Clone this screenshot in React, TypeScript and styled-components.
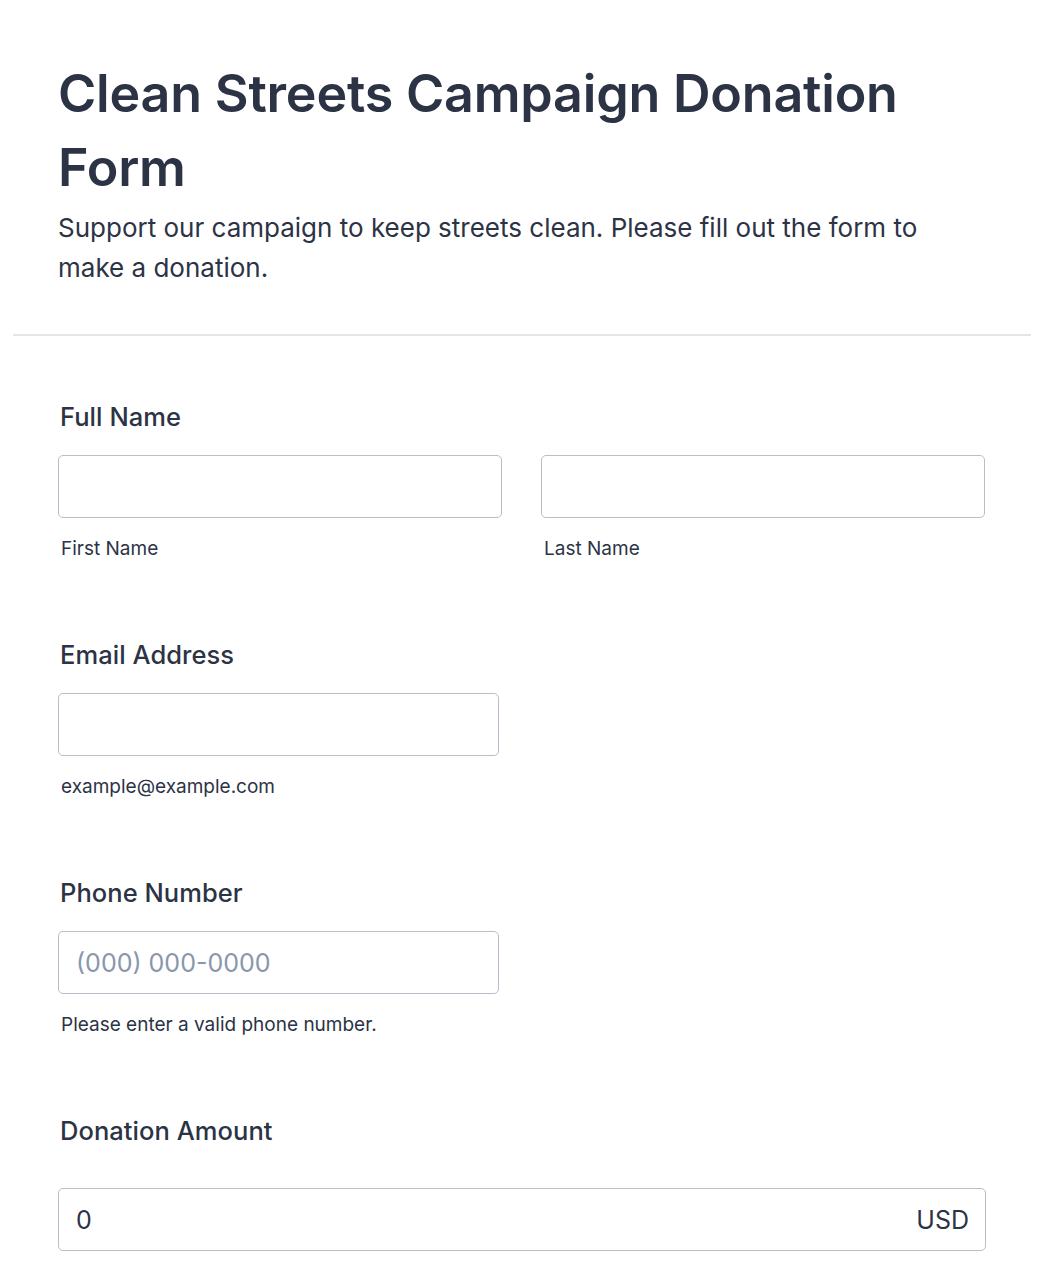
import React from "react";
import styled, { createGlobalStyle } from "styled-components";

const Global = createGlobalStyle`
  html, body { margin: 0; padding: 0; background: #ffffff; }
  body { font-family: Inter, "Noto Sans", "Liberation Sans", sans-serif; color: #2c3345; }
  * { box-sizing: border-box; }
`;

const Page = styled.main`
  padding: 0 13px;
`;

const Header = styled.header`
  padding: 57px 45px 46px;
  border-bottom: 2px solid #e3e5ea;
`;

const Title = styled.h1`
  margin: 0;
  font-size: 52px;
  line-height: 74px;
  font-weight: 600;
  color: #2c3345;
  letter-spacing: -0.2px;
`;

const Subtitle = styled.p`
  margin: 3px 0 0;
  max-width: 880px;
  font-size: 26px;
  line-height: 40px;
  font-weight: 400;
  color: #2c3345;
`;

const FieldList = styled.div`
  padding: 25px 45px 0;
  display: flex;
  flex-direction: column;
`;

const Field = styled.section`
  padding: 36px 0;
  display: flex;
  flex-direction: column;
`;

const Label = styled.label<{ $gap?: number }>`
  display: block;
  padding-left: 2px;
  margin-top: 2px;
  margin-bottom: ${(p) => p.$gap ?? 20}px;
  font-size: 25.5px;
  line-height: 36px;
  font-weight: 500;
  letter-spacing: 0.05px;
  color: #2c3345;
`;

const Row = styled.div`
  display: grid;
  grid-template-columns: 444px 444px;
  column-gap: 39px;
`;

const Cell = styled.div<{ $width?: number }>`
  display: flex;
  flex-direction: column;
  width: ${(p) => (p.$width ? `${p.$width}px` : "100%")};
`;

const Box = styled.div`
  height: 63px;
  border: 1px solid #b8bdc9;
  border-radius: 5px;
  background: #fff;
  display: flex;
  align-items: center;
  padding: 0 16px 0 17px;
`;

const Input = styled.input`
  flex: 1;
  min-width: 0;
  border: none;
  outline: none;
  background: transparent;
  font-family: inherit;
  font-size: 25px;
  color: #2c3345;
  padding: 0;
  &::placeholder {
    color: #8996ab;
  }
`;

const Currency = styled.span`
  font-size: 25px;
  color: #2c3345;
`;

const Sublabel = styled.span`
  display: block;
  margin-top: 16px;
  padding-left: 3px;
  font-size: 19px;
  line-height: 29px;
  color: #2c3345;
`;

export default function App() {
  return (
    <>
      <Global />
      <Page>
        <Header>
          <Title>Clean Streets Campaign Donation Form</Title>
          <Subtitle>
            Support our campaign to keep streets clean. Please fill out the form to make a donation.
          </Subtitle>
        </Header>
        <FieldList>
          <Field>
            <Label>Full Name</Label>
            <Row>
              <Cell>
                <Box>
                  <Input type="text" />
                </Box>
                <Sublabel>First Name</Sublabel>
              </Cell>
              <Cell>
                <Box>
                  <Input type="text" />
                </Box>
                <Sublabel>Last Name</Sublabel>
              </Cell>
            </Row>
          </Field>
          <Field>
            <Label>Email Address</Label>
            <Cell $width={441}>
              <Box>
                <Input type="email" />
              </Box>
              <Sublabel>example@example.com</Sublabel>
            </Cell>
          </Field>
          <Field>
            <Label>Phone Number</Label>
            <Cell $width={441}>
              <Box>
                <Input type="tel" placeholder="(000) 000-0000" />
              </Box>
              <Sublabel>Please enter a valid phone number.</Sublabel>
            </Cell>
          </Field>
          <Field>
            <Label $gap={39}>Donation Amount</Label>
            <Cell>
              <Box>
                <Input type="text" defaultValue="0" />
                <Currency>USD</Currency>
              </Box>
            </Cell>
          </Field>
        </FieldList>
      </Page>
    </>
  );
}
